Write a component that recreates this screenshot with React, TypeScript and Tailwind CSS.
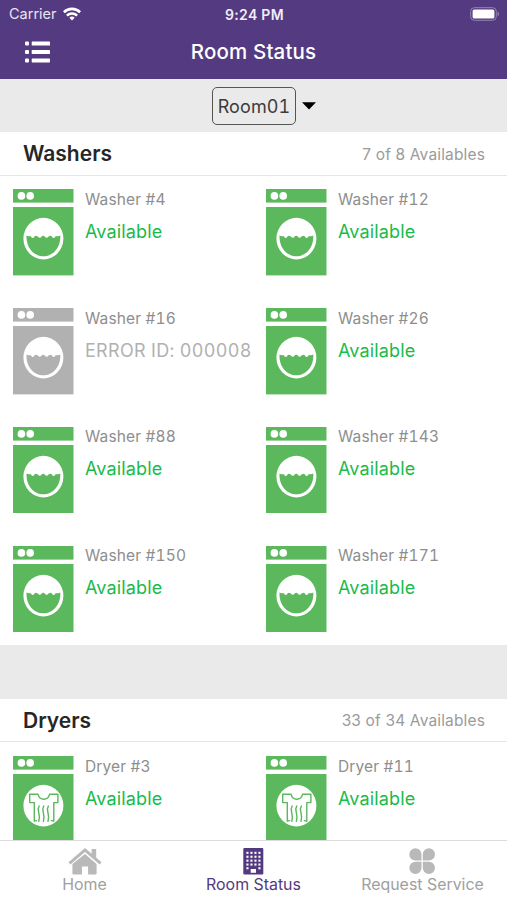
type Machine = {
  name: string;
  status: string;
  error?: boolean;
};

const washers: Machine[] = [
  { name: "Washer #4", status: "Available" },
  { name: "Washer #12", status: "Available" },
  { name: "Washer #16", status: "ERROR ID: 000008", error: true },
  { name: "Washer #26", status: "Available" },
  { name: "Washer #88", status: "Available" },
  { name: "Washer #143", status: "Available" },
  { name: "Washer #150", status: "Available" },
  { name: "Washer #171", status: "Available" },
];

const dryers: Machine[] = [
  { name: "Dryer #3", status: "Available" },
  { name: "Dryer #11", status: "Available" },
];

function WifiIcon() {
  return (
    <svg viewBox="0 0 18 14" className="h-[14px] w-[18px]" fill="none" stroke="white" strokeWidth="2.6">
      <path d="M0.9 5.2a11.6 11.6 0 0 1 16.2 0" />
      <path d="M3.9 8.6a7.3 7.3 0 0 1 10.2 0" />
      <path d="M9 13.6l-2.7-2.8a3.9 3.9 0 0 1 5.4 0z" fill="white" stroke="none" />
    </svg>
  );
}

function BatteryIcon() {
  return (
    <svg viewBox="0 0 30 14" className="h-[14px] w-[30px]">
      <rect x="0.7" y="0.7" width="25.6" height="12.6" rx="3.6" fill="none" stroke="#9485b3" strokeWidth="1" />
      <rect x="2.6" y="2.5" width="21.8" height="9" rx="1.6" fill="white" />
      <path d="M27.6 4.8c1.9.7 1.9 3.7 0 4.4z" fill="#9485b3" />
    </svg>
  );
}

function MenuIcon() {
  return (
    <svg viewBox="0 0 25 22" className="h-[22px] w-[25px]" fill="white">
      <rect x="0" y="0.5" width="4" height="4" rx="1" />
      <rect x="0" y="9" width="4" height="4" rx="1" />
      <rect x="0" y="17.4" width="4" height="4" rx="1" />
      <rect x="6.7" y="0.5" width="18.3" height="4" rx="0.6" />
      <rect x="6.7" y="9" width="18.3" height="4" rx="0.6" />
      <rect x="6.7" y="17.4" width="18.3" height="4" rx="0.6" />
    </svg>
  );
}

function MachineIcon({ dryer, color }: { dryer?: boolean; color: string }) {
  return (
    <svg viewBox="0 0 60.5 86.4" className="h-[86.4px] w-[60.5px] shrink-0">
      <rect width="60.5" height="13.6" fill={color} />
      <rect y="18" width="60.5" height="68.4" fill={color} />
      <circle cx="8.4" cy="6.9" r="3.8" fill="white" />
      <circle cx="17.2" cy="6.9" r="3.8" fill="white" />
      <ellipse cx="30.4" cy="49.6" rx="20" ry="20.8" fill="white" />
      {dryer ? (
        <g fill="none" stroke={color} strokeWidth="1.4" strokeLinejoin="round" strokeLinecap="round">
          <path d="M23.6 64.6L21.3 65.2V46.6H16.7V38.2H25C26.6 45 35 45 36.6 38.2H44.9V46.6H40.8V65.2L38.3 64.6" />
          <path d="M26.2 50c-3.2 5 2 6.8-.4 15.4" />
          <path d="M30.8 50c-3.2 5 2 6.8-.4 15.4" />
          <path d="M35.4 50c-3.2 5 2 6.8-.4 15.4" />
        </g>
      ) : (
        <path
          d="M13.5 46.5q2.2 1.4 4 .4q1.5 2.6 3.1 1.8q1.3-2.6 3.1-1.8q1.3.2 2.1 1.5q1.6 1.2 2.6-.7q1.8-1.8 3.6 0q1 1.9 2.6.7q.8-1.3 2.1-1.5q1.8-.8 3.1 1.8q1.6.8 3.1-1.8q2.4 1 4.4-.4c.6 12.2-7.3 20.8-16.9 20.8S12.9 58.7 13.5 46.5z"
          fill={color}
        />
      )}
    </svg>
  );
}

function MachineGrid({ machines, dryer }: { machines: Machine[]; dryer?: boolean }) {
  return (
    <div className="grid grid-cols-[253px_1fr] gap-y-[32.3px] pt-[13.6px] pb-[13px]">
      {machines.map((m) => (
        <div key={m.name} className="flex gap-[11.2px] pl-[13.3px]">
          <MachineIcon dryer={dryer} color={m.error ? "#b1b1b1" : "#5bb85c"} />
          <div className="pt-[0.5px] whitespace-nowrap tabular-nums">
            <p className="text-[15.5px] leading-5 tracking-[0.15px] text-[#8e8e8e]">{m.name}</p>
            <p
              className={`mt-3 text-[18px] leading-5 ${m.error ? "tracking-[0.32px] text-[#b1b1b1]" : "tracking-[0.15px] text-[#19bb4b]"}`}
            >
              {m.status}
            </p>
          </div>
        </div>
      ))}
    </div>
  );
}

function SectionHeader({ title, summary }: { title: string; summary: string }) {
  return (
    <div className="flex h-[43.5px] items-center justify-between border-b border-[#e6e6e6] pt-px pr-[22px] pl-[23px]">
      <h2 className="text-[21px] font-semibold text-[#262626]">{title}</h2>
      <span className="text-[15.5px] tracking-[0.15px] text-[#9b9b9b]">{summary}</span>
    </div>
  );
}

function HomeIcon() {
  return (
    <svg viewBox="0 0 34 27" className="h-[27px] w-[34px]" fill="#b9b9b9">
      <path d="M17 0l6.6 5.7V1.1h4.6v8.5l5.3 4.6-1.9 2.2L17 3.9 2.4 16.4.5 14.2 15.3 1.4z" />
      <path d="M17 6.1l11.6 9.8v9.5q0 1.1-1.1 1.1h-7.4v-8.1h-6.2v8.1H5.5q-1.1 0-1.1-1.1v-9.5z" />
    </svg>
  );
}

function BuildingIcon() {
  return (
    <svg viewBox="0 0 21 27" className="h-[27px] w-[21px]">
      <rect x="0.3" y="0" width="20" height="26.6" rx="1" fill="#533a80" />
      {[3.8, 7.7, 11.6, 15.5, 19.2].map((y) =>
        [3.4, 7.4, 11.4, 15.4].map((x) => (
          <rect key={`${x}-${y}`} x={x} y={y} width="2.1" height="2.1" fill="white" />
        )),
      )}
      <rect x="6.6" y="19" width="7.6" height="3" fill="#533a80" />
      <rect x="7.7" y="21" width="5.3" height="3.8" fill="white" />
    </svg>
  );
}

function CloverIcon() {
  return (
    <svg viewBox="0 0 27 27" className="h-[27px] w-[27px]" fill="#b9b9b9">
      <path d="M6.4 0.3a6.1 6.1 0 0 1 6.1 6.1v6.1H6.4a6.1 6.1 0 0 1 0-12.2z" />
      <path d="M19.9 0.3a6.1 6.1 0 0 1 0 12.2h-6.1V6.4a6.1 6.1 0 0 1 6.1-6.1z" />
      <path d="M6.4 13.8h6.1v6.1a6.1 6.1 0 1 1-6.1-6.1z" />
      <path d="M13.8 13.8h6.1a6.1 6.1 0 1 1-6.1 6.1z" />
    </svg>
  );
}

export default function App() {
  return (
    <div className="flex h-[900px] w-[507px] flex-col overflow-hidden bg-white font-['Inter',sans-serif]">
      <header className="h-[79.4px] shrink-0 bg-[#543a80] text-white">
        <div className="grid h-7 grid-cols-3 items-center pr-[7px] pl-[9px]">
          <div className="flex items-center gap-[6px]">
            <span className="text-[14.5px] text-[#e9e4f1]">Carrier</span>
            <WifiIcon />
          </div>
          <span className="text-center text-[14px] font-semibold tracking-[0.3px] whitespace-nowrap text-[#f1edf7]">
            9:24 PM
          </span>
          <div className="flex justify-end">
            <BatteryIcon />
          </div>
        </div>
        <div className="grid h-12 grid-cols-[1fr_auto_1fr] items-center px-[25px]">
          <MenuIcon />
          <h1 className="pt-px text-[20.5px] font-medium tracking-[0.15px]">Room Status</h1>
        </div>
      </header>

      <main className="flex-1 overflow-hidden">
        <div className="flex h-[53px] items-center bg-[#eaeaea] pl-[212px]">
          <div className="flex h-[38px] w-[84px] items-center justify-center rounded-[5px] border border-[#555] pt-px text-[18px] tracking-[0.1px] text-[#3c3c3c] tabular-nums">
            Room01
          </div>
          <svg viewBox="0 0 14 8" className="ml-[6px] h-[8px] w-[14px]">
            <path d="M0 0.3h14L7 7.5z" fill="black" />
          </svg>
        </div>

        <SectionHeader title="Washers" summary="7 of 8 Availables" />
        <MachineGrid machines={washers} />
        <div className="h-[54px] bg-[#eaeaea]" />
        <SectionHeader title="Dryers" summary="33 of 34 Availables" />
        <MachineGrid machines={dryers} dryer />
      </main>

      <nav className="grid h-[60.5px] shrink-0 grid-cols-3 border-t border-[#dcdcdc] bg-white text-[15.9px] text-[#a0a0a0]">
        <div className="flex flex-col items-center pt-[7px]">
          <HomeIcon />
          <span className="leading-[19px]">Home</span>
        </div>
        <div className="flex flex-col items-center pt-[7px] text-[#533a80]">
          <BuildingIcon />
          <span className="leading-[19px]">Room Status</span>
        </div>
        <div className="flex flex-col items-center pt-[7px]">
          <CloverIcon />
          <span className="leading-[19px] whitespace-nowrap">Request Service</span>
        </div>
      </nav>
    </div>
  );
}
